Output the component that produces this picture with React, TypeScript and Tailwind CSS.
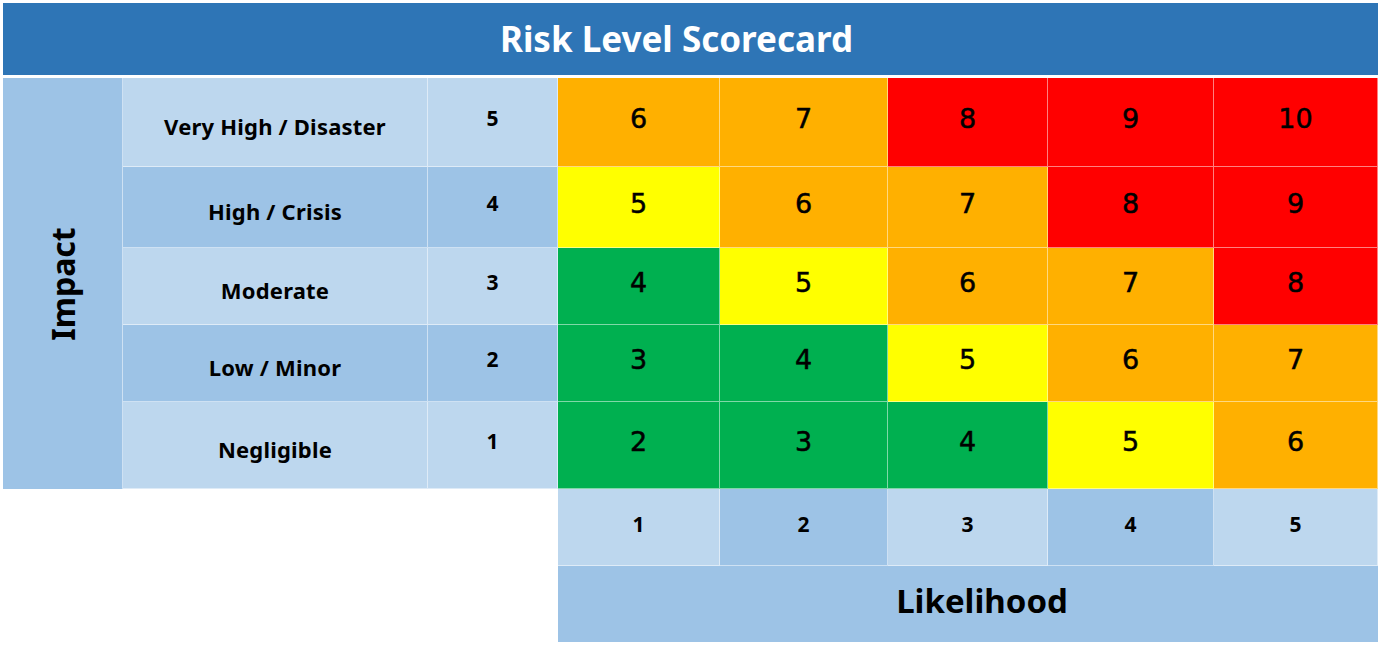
import React from 'react';

const LIGHT = 'bg-[#bdd7ee]';
const MID = 'bg-[#9dc3e6]';

const levelColors: Record<number, string> = {
    2: 'bg-[#00b050]',
    3: 'bg-[#00b050]',
    4: 'bg-[#00b050]',
    5: 'bg-[#ffff00]',
    6: 'bg-[#ffb000]',
    7: 'bg-[#ffb000]',
    8: 'bg-[#ff0000]',
    9: 'bg-[#ff0000]',
    10: 'bg-[#ff0000]',
};

const impactRows = [
    { label: 'Very High / Disaster', value: 5, shade: LIGHT },
    { label: 'High / Crisis', value: 4, shade: MID },
    { label: 'Moderate', value: 3, shade: LIGHT },
    { label: 'Low / Minor', value: 2, shade: MID },
    { label: 'Negligible', value: 1, shade: LIGHT },
];

const likelihoodShades = [LIGHT, MID, LIGHT, MID, LIGHT];

const cell = 'flex items-center justify-center border-r border-b border-white/50';
const labelFont = "font-['Noto_Sans',sans-serif] font-bold text-black";
const axisNumber = "font-['Noto_Sans',sans-serif] font-bold text-black text-[21px]";
const scoreFont = "font-['DejaVu_Sans',sans-serif] text-black text-[27px] [-webkit-text-stroke:0.5px_black]";

export default function App() {
    return (
        <div className="min-h-[645px] w-[1380px] bg-white pl-[3px] pt-[3px]">
            <div className="flex h-[72px] w-[1375px] items-center justify-center bg-[#2e75b6]">
                <h1 className="mr-[28px] font-['Noto_Sans',sans-serif] text-[35px] font-bold text-white">
                    Risk Level Scorecard
                </h1>
            </div>
            <div className="mt-[3px] grid w-[1375px] grid-cols-[120px_305px_130px_162px_168px_160px_166px_164px] grid-rows-[89px_81px_77px_77px_87px_77px_76px]">
                <div className={`${MID} row-span-5 flex items-center justify-center border-r border-white/50`}>
                    <span className={`${labelFont} -rotate-90 whitespace-nowrap text-[32px]`}>Impact</span>
                </div>
                {impactRows.map((row) => (
                    <React.Fragment key={row.value}>
                        <div className={`${cell} ${row.shade}`}>
                            <span className={`${labelFont} mt-[8px] text-[22px] tracking-[0.2px]`}>{row.label}</span>
                        </div>
                        <div className={`${cell} ${row.shade}`}>
                            <span className={`${axisNumber} -mt-[6px]`}>{row.value}</span>
                        </div>
                        {[1, 2, 3, 4, 5].map((likelihood) => {
                            const score = row.value + likelihood;
                            return (
                                <div key={likelihood} className={`${cell} ${levelColors[score]}`}>
                                    <span className={`${scoreFont} -mt-[6px]`}>{score}</span>
                                </div>
                            );
                        })}
                    </React.Fragment>
                ))}
                <div className="col-span-3 row-span-2 bg-white" />
                {likelihoodShades.map((shade, i) => (
                    <div key={i} className={`${cell} ${shade}`}>
                        <span className={`${axisNumber} -mt-[4px]`}>{i + 1}</span>
                    </div>
                ))}
                <div className={`${MID} col-span-5 flex items-center justify-center`}>
                    <span className={`${labelFont} ml-[28px] -mt-[6px] text-[33px]`}>Likelihood</span>
                </div>
            </div>
        </div>
    );
}
